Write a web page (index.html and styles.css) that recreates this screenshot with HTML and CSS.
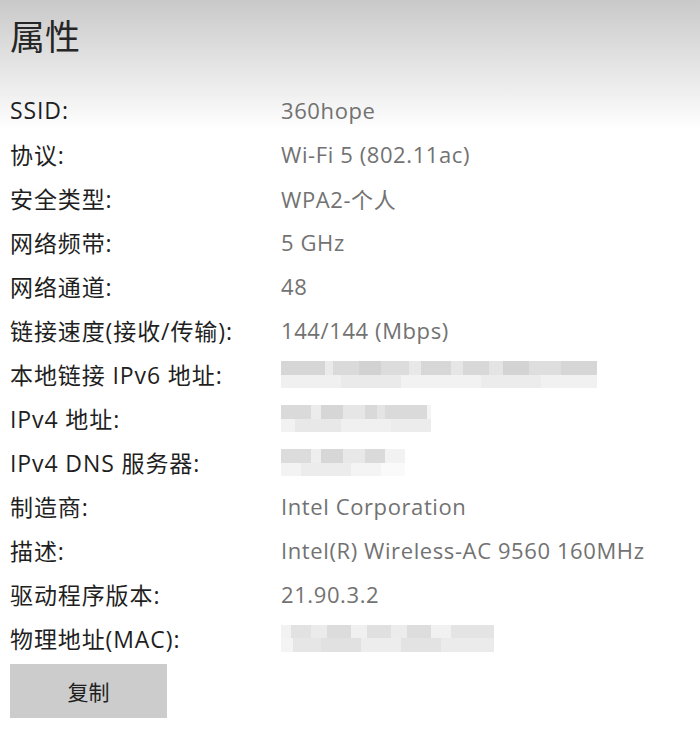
FILE: index.html
```html
<!DOCTYPE html>
<html lang="zh-CN">
<head>
    <meta charset="UTF-8">
    <meta name="viewport" content="width=device-width, initial-scale=1.0">
    <title>属性</title>
    <link rel="stylesheet" href="styles.css">
</head>
<body>

    <div class="page">
        <h1>属性</h1>

        <div class="props">
            <div class="row"><span class="key">SSID:</span><span class="val">360hope</span></div>
            <div class="row"><span class="key">协议:</span><span class="val">Wi-Fi 5 (802.11ac)</span></div>
            <div class="row"><span class="key">安全类型:</span><span class="val">WPA2-个人</span></div>
            <div class="row"><span class="key">网络频带:</span><span class="val">5 GHz</span></div>
            <div class="row"><span class="key">网络通道:</span><span class="val">48</span></div>
            <div class="row"><span class="key">链接速度(接收/传输):</span><span class="val">144/144 (Mbps)</span></div>
            <div class="row"><span class="key">本地链接 IPv6 地址:</span><span class="val"><span class="blur blur-v6"></span></span></div>
            <div class="row"><span class="key">IPv4 地址:</span><span class="val"><span class="blur blur-v4"></span></span></div>
            <div class="row"><span class="key">IPv4 DNS 服务器:</span><span class="val"><span class="blur blur-dns"></span></span></div>
            <div class="row"><span class="key">制造商:</span><span class="val">Intel Corporation</span></div>
            <div class="row"><span class="key">描述:</span><span class="val">Intel(R) Wireless-AC 9560 160MHz</span></div>
            <div class="row"><span class="key">驱动程序版本:</span><span class="val">21.90.3.2</span></div>
            <div class="row"><span class="key">物理地址(MAC):</span><span class="val"><span class="blur blur-mac"></span></span></div>
        </div>

        <button class="copy">复制</button>
    </div>

</body>
</html>
```

FILE: styles.css
```css
body {
    margin: 0;
    padding: 0;
    font-family: 'Open Sans', 'Noto Sans CJK SC', sans-serif;
    background: linear-gradient(#c9c9c9 0, #dedede 50px, #f0f0f0 95px, #ffffff 130px) no-repeat;
    background-color: #fff;
    color: #1f1f1f;
    height: 750px;
    overflow: hidden;
}

.page {
    padding-left: 10px;
}

h1 {
    margin: 0;
    height: 88px;
    line-height: 74px;
    font-size: 35px;
    font-weight: normal;
    color: #262626;
}

.row {
    display: flex;
    height: 44px;
    align-items: center;
    font-size: 22px;
    letter-spacing: 0.6px;
}

.key {
    width: 271px;
    flex-shrink: 0;
    font-size: 23px;
    letter-spacing: 0.9px;
}

.val {
    color: #727272;
}

.blur {
    display: block;
    height: 27px;
}

.blur-v6 {
    width: 316px;
    background:
        linear-gradient(90deg, #d6d6d6 0 44px, #eaeaea 44px 52px, #dadada 52px 78px, #d2d2d2 78px 100px,
            #dcdcdc 100px 128px, #e8e8e8 128px 140px, #d7d7d7 140px 170px, #e6e6e6 170px 182px,
            #d8d8d8 182px 208px, #e4e4e4 208px 222px, #d3d3d3 222px 248px, #dedede 248px 280px,
            #d6d6d6 280px 316px) top / 100% 14px no-repeat,
        linear-gradient(90deg, #f0f0f0 0 60px, #eaeaea 60px 120px, #f2f2f2 120px 200px, #ececec 200px 260px,
            #f1f1f1 260px 316px) bottom / 100% 13px no-repeat;
}

.blur-v4 {
    width: 150px;
    background:
        linear-gradient(90deg, #dadada 0 30px, #ececec 30px 40px, #d6d6d6 40px 62px, #e6e6e6 62px 84px,
            #d9d9d9 84px 96px, #e4e4e4 96px 104px, #dadada 104px 146px, #f4f4f4 146px 150px) top / 100% 14px no-repeat,
        linear-gradient(90deg, #f2f2f2 0 14px, #e8e8e8 14px 60px, #f0f0f0 60px 110px, #ececec 110px 150px) bottom / 100% 13px no-repeat;
}

.blur-dns {
    width: 124px;
    background:
        linear-gradient(90deg, #dcdcdc 0 30px, #eeeeee 30px 40px, #d7d7d7 40px 62px, #e8e8e8 62px 84px,
            #dadada 84px 104px, #f2f2f2 104px 124px) top / 100% 14px no-repeat,
        linear-gradient(90deg, #f3f3f3 0 20px, #ececec 20px 70px, #f4f4f4 70px 100px, #fafafa 100px 124px) bottom / 100% 13px no-repeat;
}

.blur-mac {
    width: 213px;
    background:
        linear-gradient(90deg, #f2f2f2 0 10px, #e2e2e2 10px 30px, #ebebeb 30px 46px, #dcdcdc 46px 70px,
            #f0f0f0 70px 86px, #e0e0e0 86px 110px, #ececec 110px 126px, #dddddd 126px 150px,
            #f1f1f1 150px 170px, #e4e4e4 170px 213px) top / 100% 13px no-repeat,
        linear-gradient(90deg, #f4f4f4 0 12px, #e6e6e6 12px 40px, #e1e1e1 40px 80px, #ededed 80px 120px,
            #e3e3e3 120px 160px, #ebebeb 160px 213px) bottom / 100% 14px no-repeat;
}

.copy {
    display: block;
    margin-top: 4px;
    width: 157px;
    height: 54px;
    border: none;
    background-color: #cccccc;
    font-family: 'Open Sans', 'Noto Sans CJK SC', sans-serif;
    font-size: 21px;
    color: #1f1f1f;
    cursor: pointer;
}
```
